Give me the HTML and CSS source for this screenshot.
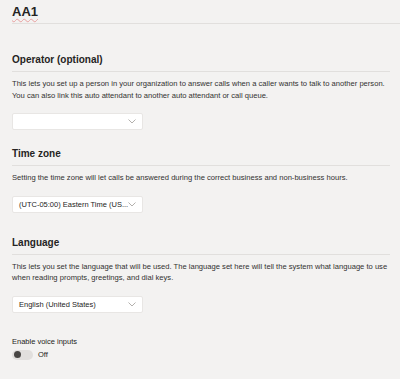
FILE: index.html
```html
<!DOCTYPE html>
<html lang="en">
<head>
    <meta charset="UTF-8">
    <meta name="viewport" content="width=device-width, initial-scale=1.0">
    <title>AA1</title>
    <link rel="stylesheet" href="styles.css">
</head>
<body>
    <div class="header">
        <h1><span class="misspelled">AA1</span></h1>
    </div>

    <div class="content">
        <div class="section section-operator">
            <h2>Operator (optional)</h2>
            <p class="desc">This lets you set up a person in your organization to answer calls when a caller wants to talk to another person. You can also link this auto attendant to another auto attendant or call queue.</p>
            <div class="dropdown">
                <span class="dropdown-text"></span>
                <svg class="chevron" width="8" height="5" viewBox="0 0 8 5"><path d="M0.5 0.5 L4 4 L7.5 0.5" fill="none" stroke="#b3b0ad" stroke-width="1"/></svg>
            </div>
        </div>

        <div class="section section-timezone">
            <h2>Time zone</h2>
            <p class="desc">Setting the time zone will let calls be answered during the correct business and non-business hours.</p>
            <div class="dropdown">
                <span class="dropdown-text">(UTC-05:00) Eastern Time (US...</span>
                <svg class="chevron" width="8" height="5" viewBox="0 0 8 5"><path d="M0.5 0.5 L4 4 L7.5 0.5" fill="none" stroke="#b3b0ad" stroke-width="1"/></svg>
            </div>
        </div>

        <div class="section section-language">
            <h2>Language</h2>
            <p class="desc">This lets you set the language that will be used. The language set here will tell the system what language to use when reading prompts, greetings, and dial keys.</p>
            <div class="dropdown">
                <span class="dropdown-text">English (United States)</span>
                <svg class="chevron" width="8" height="5" viewBox="0 0 8 5"><path d="M0.5 0.5 L4 4 L7.5 0.5" fill="none" stroke="#b3b0ad" stroke-width="1"/></svg>
            </div>
        </div>

        <div class="voice">
            <div class="voice-label">Enable voice inputs</div>
            <div class="toggle-row">
                <span class="toggle"><span class="knob"></span></span>
                <span class="toggle-text">Off</span>
            </div>
        </div>
    </div>
</body>
</html>
```

FILE: styles.css
```css
body {
    margin: 0;
    background-color: #f3f2f1;
    color: #252423;
    font-family: 'Liberation Sans', Arial, sans-serif;
}
.header {
    padding: 2px 0 0 12px;
}
.header h1 {
    margin: 0;
    font-size: 13px;
    line-height: 20px;
    font-weight: bold;
    border-bottom: 1px solid #e1dfdd;
    height: 21px;
}
.misspelled {
    text-decoration: underline wavy #e8a0a0;
    text-decoration-thickness: 1px;
    text-underline-offset: 2px;
}
.content {
    padding: 0 10px 0 12px;
}
.section h2 {
    margin: 0;
    font-size: 10px;
    line-height: 14px;
    font-weight: bold;
    padding-bottom: 4px;
    border-bottom: 1px solid #e1dfdd;
}
.section-operator {
    padding-top: 29px;
}
.section-timezone {
    padding-top: 17px;
}
.section-language {
    padding-top: 23px;
}
.desc {
    margin: 6px 0 0;
    font-size: 7.6px;
    line-height: 11.5px;
    color: #323130;
}
.dropdown {
    margin-top: 12px;
    width: 117px;
    height: 15px;
    padding: 0 6px;
    background-color: #fff;
    border: 1px solid #e8e6e4;
    border-radius: 2px;
    display: flex;
    align-items: center;
    justify-content: space-between;
}
.dropdown-text {
    font-size: 7.5px;
    color: #252423;
    white-space: nowrap;
}
.chevron {
    flex-shrink: 0;
}
.voice {
    padding-top: 24px;
}
.voice-label {
    font-size: 7.5px;
    line-height: 10px;
    color: #252423;
}
.toggle-row {
    display: flex;
    align-items: center;
    gap: 5px;
    margin-top: 3px;
}
.toggle {
    width: 21px;
    height: 10px;
    border-radius: 5px;
    background-color: #e1dfdd;
    display: flex;
    align-items: center;
    padding-left: 2px;
    box-sizing: border-box;
}
.knob {
    width: 7px;
    height: 7px;
    border-radius: 50%;
    background-color: #484644;
}
.toggle-text {
    font-size: 7.5px;
    color: #252423;
}
```
